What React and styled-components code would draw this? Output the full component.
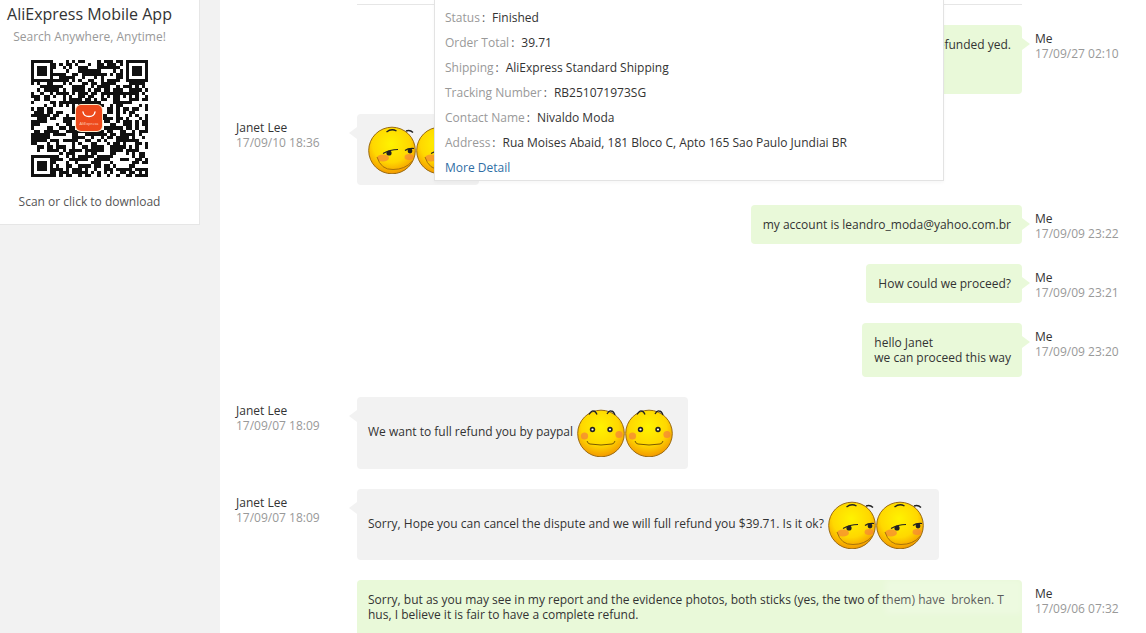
import React from "react";
import styled, { createGlobalStyle } from "styled-components";

const GlobalStyle = createGlobalStyle`
  html, body {
    margin: 0;
    padding: 0;
    background: #fff;
  }
  body {
    font-family: "Open Sans", "Liberation Sans", sans-serif;
    font-size: 12px;
    color: #333;
  }
`;

// fake qr pattern, seeded so every render is the same
const QR_SIZE = 37;

const inFinder = (x, y, ox, oy) => x >= ox && x < ox + 8 && y >= oy && y < oy + 8;

const buildQrPath = () => {
  let seed = 4711;
  const next = () => {
    seed = (seed * 1103515245 + 12345) & 0x7fffffff;
    return (seed >> 12) / (0x7fffffff >> 12);
  };
  let d = "";
  const finders = [
    [0, 0],
    [QR_SIZE - 7, 0],
    [0, QR_SIZE - 7],
  ];
  finders.forEach(([x, y]) => {
    d += `M${x} ${y}h7v7h-7zM${x + 1} ${y + 1}v5h5v-5zM${x + 2} ${y + 2}h3v3h-3z`;
  });
  for (let y = 0; y < QR_SIZE; y++) {
    for (let x = 0; x < QR_SIZE; x++) {
      const black = next() > 0.43;
      if (inFinder(x, y, -1, -1) || inFinder(x, y, QR_SIZE - 8, -1) || inFinder(x, y, -1, QR_SIZE - 8)) continue;
      if (black) d += `M${x} ${y}h1v1h-1z`;
    }
  }
  return d;
};

const qrPath = buildQrPath();

const QrCode = () => (
  <QrBox>
    <svg width="117" height="117" viewBox={`0 0 ${QR_SIZE} ${QR_SIZE}`} shapeRendering="crispEdges">
      <path d={qrPath} fill="#111" fillRule="evenodd" />
    </svg>
    <QrLogo>
      <svg width="26" height="26" viewBox="0 0 26 26">
        <path d="M7 7c1 6 11 6 12 0" fill="none" stroke="#fff" strokeWidth="1.4" strokeLinecap="round" />
        <text x="13" y="20" textAnchor="middle" fontSize="4" fill="#ffd9c8" fontFamily="Open Sans, sans-serif">
          AliExpress
        </text>
      </svg>
    </QrLogo>
  </QrBox>
);

const Emoji = ({ type, id }) => (
  <EmojiSvg width="48" height="48" viewBox="0 0 48 48">
    <defs>
      <radialGradient id={id} cx="0.48" cy="0.36" r="0.66">
        <stop offset="0" stopColor="#fff300" />
        <stop offset="0.6" stopColor="#ffd800" />
        <stop offset="1" stopColor="#f29400" />
      </radialGradient>
    </defs>
    <circle cx="24" cy="24.5" r="23.3" fill={`url(#${id})`} stroke="#9a6a10" strokeWidth="1" />
    {type === "smile" ? (
      <>
        <path d="M12 5.5q2.5-4 4.5-3.5q2 0 3.5 3.5M30 5q2-3.5 4-3q2.500 0 4 4" fill="none" stroke="#222" strokeWidth="1.3" />
        <circle cx="15.500" cy="20.500" r="2.700" fill="#222" />
        <circle cx="15.500" cy="20.500" r="1.100" fill="#fff" />
        <circle cx="33" cy="20.500" r="2.700" fill="#222" />
        <circle cx="33" cy="20.500" r="1.100" fill="#fff" />
        <circle cx="7.500" cy="27" r="3.600" fill="#f4803c" opacity="0.7" />
        <circle cx="42" cy="25.500" r="3.600" fill="#f4803c" opacity="0.7" />
        <path d="M10 32q1 3 3 3q11 2 22 0q2 0 3-3" fill="none" stroke="#7a5a00" strokeWidth="1" />
      </>
    ) : (
      <>
        <path d="M18.500 6q5-4 10-1M38 5q4-1.500 7 1.500" fill="none" stroke="#222" strokeWidth="1.400" />
        <path d="M15 27.500q7-4 15-4M37 24.500q3-2.500 9-2" fill="none" stroke="#222" strokeWidth="1.200" />
        <circle cx="21" cy="27" r="2.600" fill="#222" />
        <circle cx="42" cy="25" r="2.400" fill="#222" />
        <ellipse cx="15" cy="32" rx="6" ry="3.400" fill="#f4803c" opacity="0.65" />
        <ellipse cx="41" cy="31" rx="4.500" ry="3" fill="#f4803c" opacity="0.65" />
        <path d="M9 31q4 13 16 12.500q12 0 19-8" fill="none" stroke="#a9720a" strokeWidth="1" />
      </>
    )}
  </EmojiSvg>
);

const App = () => (
  <Page>
    <GlobalStyle />
    <Sidebar>
      <AppCard>
        <AppTitle>AliExpress Mobile App</AppTitle>
        <AppSubtitle>Search Anywhere, Anytime!</AppSubtitle>
        <QrCode />
        <AppHint>Scan or click to download</AppHint>
      </AppCard>
    </Sidebar>
    <Main>
      <TopRule />
      <Thread>
        <Row>
          <Side />
          <Cell $mine>
            <Bubble $mine $tall>
              <TopText>Not refunded yed.</TopText>
            </Bubble>
          </Cell>
          <Side $mine>
            <Name>Me</Name>
            <Time>17/09/27 02:10</Time>
          </Side>
        </Row>
        <Row>
          <Side>
            <Name>Janet Lee</Name>
            <Time>17/09/10 18:36</Time>
          </Side>
          <Cell>
            <Bubble $emoji>
              <Emoji type="smirk" id="e1" />
              <Emoji type="smirk" id="e2" />
            </Bubble>
          </Cell>
          <Side $mine />
        </Row>
        <Row>
          <Side />
          <Cell $mine>
            <Bubble $mine>my account is leandro_moda@yahoo.com.br</Bubble>
          </Cell>
          <Side $mine>
            <Name>Me</Name>
            <Time>17/09/09 23:22</Time>
          </Side>
        </Row>
        <Row>
          <Side />
          <Cell $mine>
            <Bubble $mine>How could we proceed?</Bubble>
          </Cell>
          <Side $mine>
            <Name>Me</Name>
            <Time>17/09/09 23:21</Time>
          </Side>
        </Row>
        <Row>
          <Side />
          <Cell $mine>
            <Bubble $mine>
              hello Janet
              <br />
              we can proceed this way
            </Bubble>
          </Cell>
          <Side $mine>
            <Name>Me</Name>
            <Time>17/09/09 23:20</Time>
          </Side>
        </Row>
        <Row>
          <Side>
            <Name>Janet Lee</Name>
            <Time>17/09/07 18:09</Time>
          </Side>
          <Cell>
            <Bubble $emoji>
              We want to full refund you by paypal
              <EmojiGap />
              <Emoji type="smile" id="e3" />
              <Emoji type="smile" id="e4" />
            </Bubble>
          </Cell>
          <Side $mine />
        </Row>
        <Row>
          <Side>
            <Name>Janet Lee</Name>
            <Time>17/09/07 18:09</Time>
          </Side>
          <Cell>
            <Bubble $emoji>
              Sorry, Hope you can cancel the dispute and we will full refund you $39.71. Is it ok?
              <EmojiGap />
              <Emoji type="smirk" id="e5" />
              <Emoji type="smirk" id="e6" />
            </Bubble>
          </Cell>
          <Side $mine />
        </Row>
        <Row>
          <Side />
          <Cell $mine>
            <Bubble $mine $wide>
              Sorry, but as you may see in my report and the evidence photos, both sticks (yes, the two of them) have  broken. T
              <br />
              hus, I believe it is fair to have a complete refund.
              <br />
              <br />
              <Watermark />
            </Bubble>
          </Cell>
          <Side $mine>
            <Name>Me</Name>
            <Time>17/09/06 07:32</Time>
          </Side>
        </Row>
      </Thread>
      <OrderPopover>
        <OrderLine>
          <OrderLabel>Status</OrderLabel>
          <OrderValue>Finished</OrderValue>
        </OrderLine>
        <OrderLine>
          <OrderLabel>Order Total</OrderLabel>
          <OrderValue>39.71</OrderValue>
        </OrderLine>
        <OrderLine>
          <OrderLabel>Shipping</OrderLabel>
          <OrderValue>AliExpress Standard Shipping</OrderValue>
        </OrderLine>
        <OrderLine>
          <OrderLabel>Tracking Number</OrderLabel>
          <OrderValue>RB251071973SG</OrderValue>
        </OrderLine>
        <OrderLine>
          <OrderLabel>Contact Name</OrderLabel>
          <OrderValue>Nivaldo Moda</OrderValue>
        </OrderLine>
        <OrderLine>
          <OrderLabel>Address</OrderLabel>
          <OrderValue>Rua Moises Abaid, 181 Bloco C, Apto 165 Sao Paulo Jundiai BR</OrderValue>
        </OrderLine>
        <OrderLine>
          <MoreLink>More Detail</MoreLink>
        </OrderLine>
      </OrderPopover>
    </Main>
  </Page>
);

const Page = styled.div`
  display: flex;
  width: 1146px;
  height: 633px;
  overflow: hidden;
`;

const Sidebar = styled.aside`
  flex: 0 0 220px;
  background: #f2f2f2;
`;

const AppCard = styled.div`
  box-sizing: border-box;
  width: 200px;
  height: 225px;
  padding: 3px 20px 0 0;
  background: #fff;
  border-right: 1px solid #e6e6e6;
  border-bottom: 1px solid #e6e6e6;
  display: flex;
  flex-direction: column;
  align-items: center;
`;

const AppTitle = styled.div`
  font-size: 16px;
  line-height: 22px;
  color: #333;
  white-space: nowrap;
`;

const AppSubtitle = styled.div`
  margin-top: 3px;
  font-size: 12px;
  line-height: 17px;
  color: #999;
  white-space: nowrap;
`;

const QrBox = styled.div`
  position: relative;
  width: 117px;
  height: 117px;
  margin-top: 15px;
  line-height: 0;
`;

const QrLogo = styled.div`
  position: absolute;
  left: 45px;
  top: 45px;
  width: 26px;
  height: 26px;
  background: #ee4a1c;
  border-radius: 5px;
  box-shadow: 0 0 0 1px #ffe9c9;
`;

const AppHint = styled.div`
  margin-top: 16px;
  font-size: 12px;
  line-height: 17px;
  color: #555;
  white-space: nowrap;
`;

const Main = styled.main`
  position: relative;
  flex: 1;
  padding-left: 16px;
`;

const TopRule = styled.div`
  width: 665px;
  height: 4px;
  margin-left: 121px;
  border-bottom: 1px solid #e6e6e6;
`;

const Thread = styled.div`
  display: flex;
  flex-direction: column;
  gap: 20px;
  margin-top: 20px;
`;

const Row = styled.div`
  display: grid;
  grid-template-columns: 121px 665px 1fr;
`;

const Side = styled.div`
  padding-top: 6px;
  padding-left: ${(p) => (p.$mine ? "13px" : "0")};
  line-height: 15px;
`;

const Name = styled.div`
  color: #333;
`;

const Time = styled.div`
  color: #999;
`;

const Cell = styled.div`
  display: flex;
  justify-content: ${(p) => (p.$mine ? "flex-end" : "flex-start")};
`;

const Bubble = styled.div`
  position: relative;
  box-sizing: border-box;
  padding: 12px 11px 12px ${(p) => (p.$mine && !p.$wide ? "12px" : "11px")};
  padding-right: ${(p) => (p.$emoji ? "15px" : "11px")};
  line-height: 15px;
  color: #333;
  white-space: pre-wrap;
  overflow: visible;
  border-radius: 4px;
  background: ${(p) => (p.$mine ? "#e9f9d9" : "#f2f2f2")};
  width: ${(p) => (p.$wide ? "665px" : p.$tall ? "500px" : "auto")};
  height: ${(p) => (p.$tall ? "69px" : p.$emoji ? "71.4px" : "auto")};
  text-align: ${(p) => (p.$tall ? "right" : "left")};

  &::after {
    content: "";
    position: absolute;
    top: 13px;
    width: 0;
    height: 0;
    border-top: 6px solid transparent;
    border-bottom: 6px solid transparent;
    ${(p) =>
      p.$mine
        ? `right: -8px; border-left: 8px solid ${p.$wide ? "transparent" : "#e9f9d9"};`
        : "left: -8px; border-right: 8px solid #f2f2f2;"}
  }
`;

const TopText = styled.span`
  display: block;
`;

const EmojiSvg = styled.svg`
  vertical-align: middle;
`;

const EmojiGap = styled.span`
  display: inline-block;
  width: 4px;
`;

// faint photo watermark sitting over the last bubble
const Watermark = styled.div`
  position: absolute;
  left: 528px;
  top: 0;
  width: 137px;
  height: 34px;
  background: rgba(255, 255, 255, 0.2);
  filter: blur(3px);
`;

const OrderPopover = styled.div`
  position: absolute;
  left: 214px;
  top: -1px;
  box-sizing: border-box;
  width: 510px;
  height: 182px;
  padding: 5px 10px 0;
  background: #fff;
  border: 1px solid #e3e3e3;
  box-shadow: 0 2px 3px rgba(0, 0, 0, 0.03);
`;

const OrderLine = styled.div`
  height: 25px;
  line-height: 25px;
  white-space: nowrap;
`;

const OrderLabel = styled.span`
  color: #999;

  &::after {
    content: ":";
    color: #555;
    margin: 0 7px 0 2px;
  }
`;

const OrderValue = styled.span`
  color: #333;
`;

const MoreLink = styled.a`
  color: #2f6ea5;
`;

export default App;
